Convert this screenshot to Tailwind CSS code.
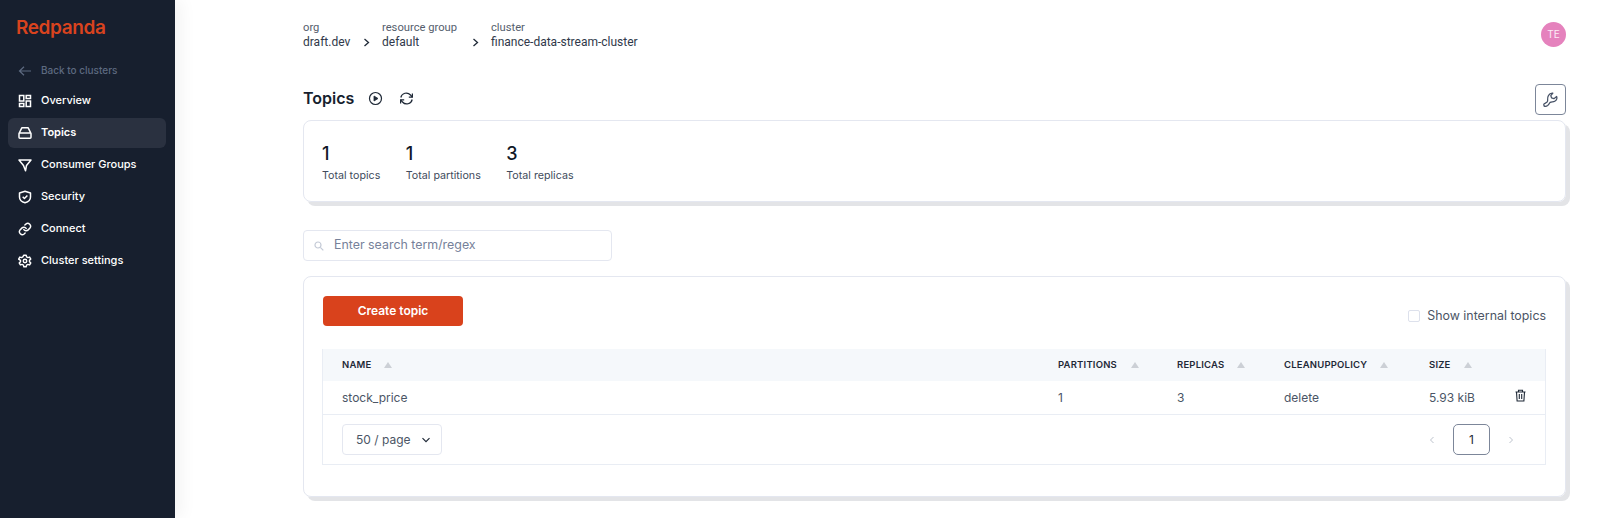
<!doctype html>
<html>
<head>
<meta charset="utf-8">
<script src="https://cdn.jsdelivr.net/npm/@tailwindcss/browser@4"></script>
</head>
<body class="font-['Inter',sans-serif] bg-white">
<div class="flex h-[518px] w-[1600px] overflow-hidden">
  <aside class="w-[175px] shrink-0 bg-[#171f2e] text-white shadow-[6px_0_16px_rgba(0,0,0,0.05)] pl-[8px] pr-[9px]">
    <div class="h-[56px] pl-[8px] pt-[14px] text-[#d9431e] text-[19px] leading-[28px] font-semibold tracking-[-0.4px]">Redpanda</div>
    <div class="h-[29.5px] flex items-center pl-[10px] text-[#5d6a80] text-[10px] font-medium">
      <svg class="w-[14px] h-[14px] mr-[9px]" viewBox="0 0 14 14" fill="none" stroke="currentColor" stroke-width="1.2"><path d="M13 7H1.500M6 2.700 1.500 7 6 11.300"/></svg>
      <span>Back to clusters</span>
    </div>
    <nav class="flex flex-col gap-[2px] text-[11px] font-medium">
      <div class="h-[30px] flex items-center pl-[10px] rounded-md">
        <svg class="w-[14px] h-[14px] mr-[9px]" viewBox="0 0 14 14" fill="none" stroke="currentColor" stroke-width="1.5"><rect x="1.500" y="1.500" width="4.300" height="5.500"/><rect x="8.200" y="1.500" width="4.300" height="3"/><rect x="1.500" y="9.500" width="4.300" height="3"/><rect x="8.200" y="7" width="4.300" height="5.500"/></svg>
        <span>Overview</span>
      </div>
      <div class="h-[30px] flex items-center pl-[10px] rounded-md bg-[#2a3140] font-semibold">
        <svg class="w-[14px] h-[14px] mr-[9px]" viewBox="0 0 14 14" fill="none" stroke="currentColor" stroke-width="1.500" stroke-linejoin="round"><path d="M1 7.500 3.800 1.800h6.400L13 7.500v3.700a1 1 0 0 1-1 1H2a1 1 0 0 1-1-1zM1.500 7h11"/></svg>
        <span>Topics</span>
      </div>
      <div class="h-[30px] flex items-center pl-[10px]">
        <svg class="w-[14px] h-[14px] mr-[9px]" viewBox="0 0 14 14" fill="none" stroke="currentColor" stroke-width="1.500" stroke-linejoin="round"><path d="M1 2h12L8.500 7.500 7.500 12.800 5.500 7.500z"/></svg>
        <span>Consumer Groups</span>
      </div>
      <div class="h-[30px] flex items-center pl-[10px]">
        <svg class="w-[14px] h-[14px] mr-[9px]" viewBox="0 0 14 14" fill="none" stroke="currentColor" stroke-width="1.500" stroke-linejoin="round"><path d="M7 1.200 12.500 3v4c0 3-2.500 5-5.500 5.800C4 12 1.500 10 1.500 7V3z"/><path d="m4.700 6.800 1.700 1.700 3-3"/></svg>
        <span>Security</span>
      </div>
      <div class="h-[30px] flex items-center pl-[10px]">
        <svg class="w-[14px] h-[14px] mr-[9px]" viewBox="0 0 24 24" fill="none" stroke="currentColor" stroke-width="2.500" stroke-linecap="round"><path d="M10 13a5 5 0 0 0 7.500.5l3-3a5 5 0 0 0-7-7l-1.700 1.700"/><path d="M14 11a5 5 0 0 0-7.500-.5l-3 3a5 5 0 0 0 7 7l1.700-1.700"/></svg>
        <span>Connect</span>
      </div>
      <div class="h-[30px] flex items-center pl-[10px]">
        <svg class="w-[14px] h-[14px] mr-[9px]" viewBox="0 0 24 24" fill="none" stroke="currentColor" stroke-width="2.500" stroke-linejoin="round"><circle cx="12" cy="12" r="3"/><path d="M10 2h4l.7 3 2.200 1.200 3-.9 2 3.400-2.200 2.200v2.200l2.200 2.200-2 3.400-3-.9-2.200 1.200-.7 3h-4l-.7-3-2.200-1.200-3 .9-2-3.400 2.200-2.200v-2.200L1.100 8.700l2-3.400 3 .9L8.300 5z"/></svg>
        <span>Cluster settings</span>
      </div>
    </nav>
  </aside>

  <main class="flex-1 pl-[128px] pr-[34px] text-[#1f2937]">
    <header class="h-[76px] pt-[20px] flex justify-between font-['Roboto',sans-serif] text-[12px] leading-[15px] text-[#30394a]">
      <div class="flex">
        <div class="flex flex-col w-[60px]"><span class="text-[#555e6d] text-[11.2px]">org</span><span>draft.dev</span></div>
        <div class="w-[19px] pt-[15px]"><svg class="w-[8px] h-[15px]" viewBox="0 0 8 15" fill="none" stroke="#1f2937" stroke-width="1.3"><path d="m1.500 4 4 3.500-4 3.500"/></svg></div>
        <div class="flex flex-col w-[90px]"><span class="text-[#555e6d] text-[11.2px]">resource group</span><span>default</span></div>
        <div class="w-[19px] pt-[15px]"><svg class="w-[8px] h-[15px]" viewBox="0 0 8 15" fill="none" stroke="#1f2937" stroke-width="1.3"><path d="m1.500 4 4 3.500-4 3.500"/></svg></div>
        <div class="flex flex-col"><span class="text-[#555e6d] text-[11.2px]">cluster</span><span>finance-data-stream-cluster</span></div>
      </div>
      <div class="w-[25px] h-[25px] mt-[2px] rounded-full bg-[#e582bd] text-white/85 text-[10px] font-['Inter',sans-serif] flex items-center justify-center">TE</div>
    </header>

    <div class="h-[44px] flex items-start justify-between">
      <div class="flex items-center h-[44px]">
        <h1 class="text-[16px] font-semibold text-[#171f2e] mr-[14px]">Topics</h1>
        <svg class="w-[15px] h-[15px] mr-[16px]" viewBox="0 0 15 15" fill="none" stroke="#1f2937" stroke-width="1.200"><circle cx="7.500" cy="7.500" r="6"/><path d="M6 5v5l4-2.500z" fill="#1f2937" stroke-width="0.8"/></svg>
        <svg class="w-[15px] h-[15px]" viewBox="0 0 15 15" fill="none" stroke="#1f2937" stroke-width="1.200"><path d="M1.800 6.500a5.600 5.600 0 0 1 9.700-2.500l1.800 2M13.200 8.500a5.600 5.600 0 0 1-9.700 2.500l-1.800-2"/><path d="M9.800 6.200h3.600V2.600M5.200 8.800H1.600v3.600"/></svg>
      </div>
      <div class="w-[31px] h-[31px] mt-[8px] rounded-[4px] border border-[#7c8699] flex items-center justify-center">
        <svg class="w-[17px] h-[17px]" viewBox="0 0 16 16" fill="none" stroke="#475266" stroke-width="1.200" stroke-linejoin="round" stroke-linecap="round"><path d="M2.500 14.200c-1.300-.8-1-2 .2-2.500 1.500-.7 2.500-1 2.600-2.300C5.200 7.500 5 6 6 4.300 7 2.500 8.500 1.800 10.200 2L8.300 4.400l.7 2.100 2.200.7L13.800 5.200c.6 1.800-.2 3.500-1.800 4.400-1.600.9-3 .2-4.200 1.100-1 .8-1.300 2-2.500 3-.9.700-2.100 1-3.300.5z"/></svg>
      </div>
    </div>

    <section class="h-[82px] rounded-[8px] border border-[#e4e7f0] shadow-[4px_4px_0_#e3e4e7] flex items-center pl-[18px] gap-[25.500px] pt-[1px]">
      <div><div class="text-[18px] leading-[26px] mt-[1px] font-medium text-[#111827]">1</div><div class="text-[10.700px] leading-[16px] mt-[1px] text-[#414b5c]">Total topics</div></div>
      <div><div class="text-[18px] leading-[26px] mt-[1px] font-medium text-[#111827]">1</div><div class="text-[10.700px] leading-[16px] mt-[1px] text-[#414b5c]">Total partitions</div></div>
      <div><div class="text-[18px] leading-[26px] mt-[1px] font-medium text-[#111827]">3</div><div class="text-[10.700px] leading-[16px] mt-[1px] text-[#414b5c]">Total replicas</div></div>
    </section>

    <div class="mt-[28px] w-[309px] h-[31px] rounded-[4px] border border-[#e4e7f0] flex items-center pl-[10px] text-[12.400px] text-[#76819a]">
      <svg class="w-[10px] h-[10px] mr-[10px]" viewBox="0 0 10 10" fill="none" stroke="#c4cad6" stroke-width="1.200"><circle cx="4" cy="4" r="3"/><path d="m6.300 6.300 3 3"/></svg>
      <span>Enter search term/regex</span>
    </div>

    <section class="mt-[15px] h-[221px] rounded-[8px] border border-[#e4e7f0] shadow-[4px_4px_0_#e3e4e7] pt-[19px] pl-[18px] pr-[19px]">
      <div class="flex justify-between h-[53px]">
        <div class="ml-[1px] w-[140px] h-[30px] rounded-[4px] bg-[#d9421c] text-white text-[12px] font-semibold flex items-center justify-center">Create topic</div>
        <div class="flex items-center gap-[7px] h-[40px] text-[12.400px] text-[#4b5565]">
          <span class="w-[12px] h-[12px] rounded-[2px] border border-[#dde1ec]"></span><span>Show internal topics</span>
        </div>
      </div>
      <div class="border-x border-b border-[#e9edf4]">
        <div class="grid grid-cols-[716px_119px_107px_145px_1fr] h-[32px] items-center bg-[#f5f8fb] text-[9.500px] font-semibold tracking-[0.2px] text-[#1f2937] pl-[19px]">
          <div class="flex items-center gap-[13px]">NAME<svg class="w-[8px] h-[6px]" viewBox="0 0 8 6" fill="#ccd0d6"><path d="M4 0l4 6H0z"/></svg></div>
          <div class="flex items-center gap-[14px]">PARTITIONS<svg class="w-[8px] h-[6px]" viewBox="0 0 8 6" fill="#ccd0d6"><path d="M4 0l4 6H0z"/></svg></div>
          <div class="flex items-center gap-[13px]">REPLICAS<svg class="w-[8px] h-[6px]" viewBox="0 0 8 6" fill="#ccd0d6"><path d="M4 0l4 6H0z"/></svg></div>
          <div class="flex items-center gap-[13px]">CLEANUPPOLICY<svg class="w-[8px] h-[6px]" viewBox="0 0 8 6" fill="#ccd0d6"><path d="M4 0l4 6H0z"/></svg></div>
          <div class="flex items-center gap-[13px]">SIZE<svg class="w-[8px] h-[6px]" viewBox="0 0 8 6" fill="#ccd0d6"><path d="M4 0l4 6H0z"/></svg></div>
        </div>
        <div class="grid grid-cols-[716px_119px_107px_145px_85px_1fr] h-[34px] items-center text-[12px] text-[#4b5565] pl-[19px] border-b border-[#e9edf4]">
          <div>stock_price</div><div>1</div><div>3</div><div>delete</div><div>5.93 kiB</div>
          <svg class="w-[13px] h-[13px] -mt-[5px]" viewBox="0 0 13 13" fill="none" stroke="#1f2937" stroke-width="1.100"><path d="M1.500 3h10M4.500 3V1.200h4V3M2.500 3l.6 9h6.800l.6-9M5.300 5v5M7.700 5v5"/></svg>
        </div>
        <div class="h-[49px] flex items-center justify-between pl-[19px] pr-[30px]">
          <div class="w-[100px] h-[31px] rounded-[4px] border border-[#e4e7f0] flex items-center justify-between pl-[13px] pr-[10px] text-[12px] text-[#4b5565]">
            <span>50 / page</span>
            <svg class="w-[10px] h-[10px]" viewBox="0 0 10 10" fill="none" stroke="#1f2937" stroke-width="1.200"><path d="m1.500 3.200 3.500 3.500 3.500-3.500"/></svg>
          </div>
          <div class="flex items-center gap-[17px] text-[#bcc2cc]">
            <svg class="w-[8px] h-[8px]" viewBox="0 0 8 8" fill="none" stroke="currentColor"><path d="M5.500 1 2.500 4l3 3"/></svg>
            <div class="w-[37px] h-[31px] rounded-[5px] border border-[#7c8699] text-[#1f2937] text-[12px] flex items-center justify-center">1</div>
            <svg class="w-[8px] h-[8px]" viewBox="0 0 8 8" fill="none" stroke="currentColor"><path d="M2.500 1l3 3-3 3"/></svg>
          </div>
        </div>
      </div>
    </section>
  </main>
</div>
</body>
</html>
